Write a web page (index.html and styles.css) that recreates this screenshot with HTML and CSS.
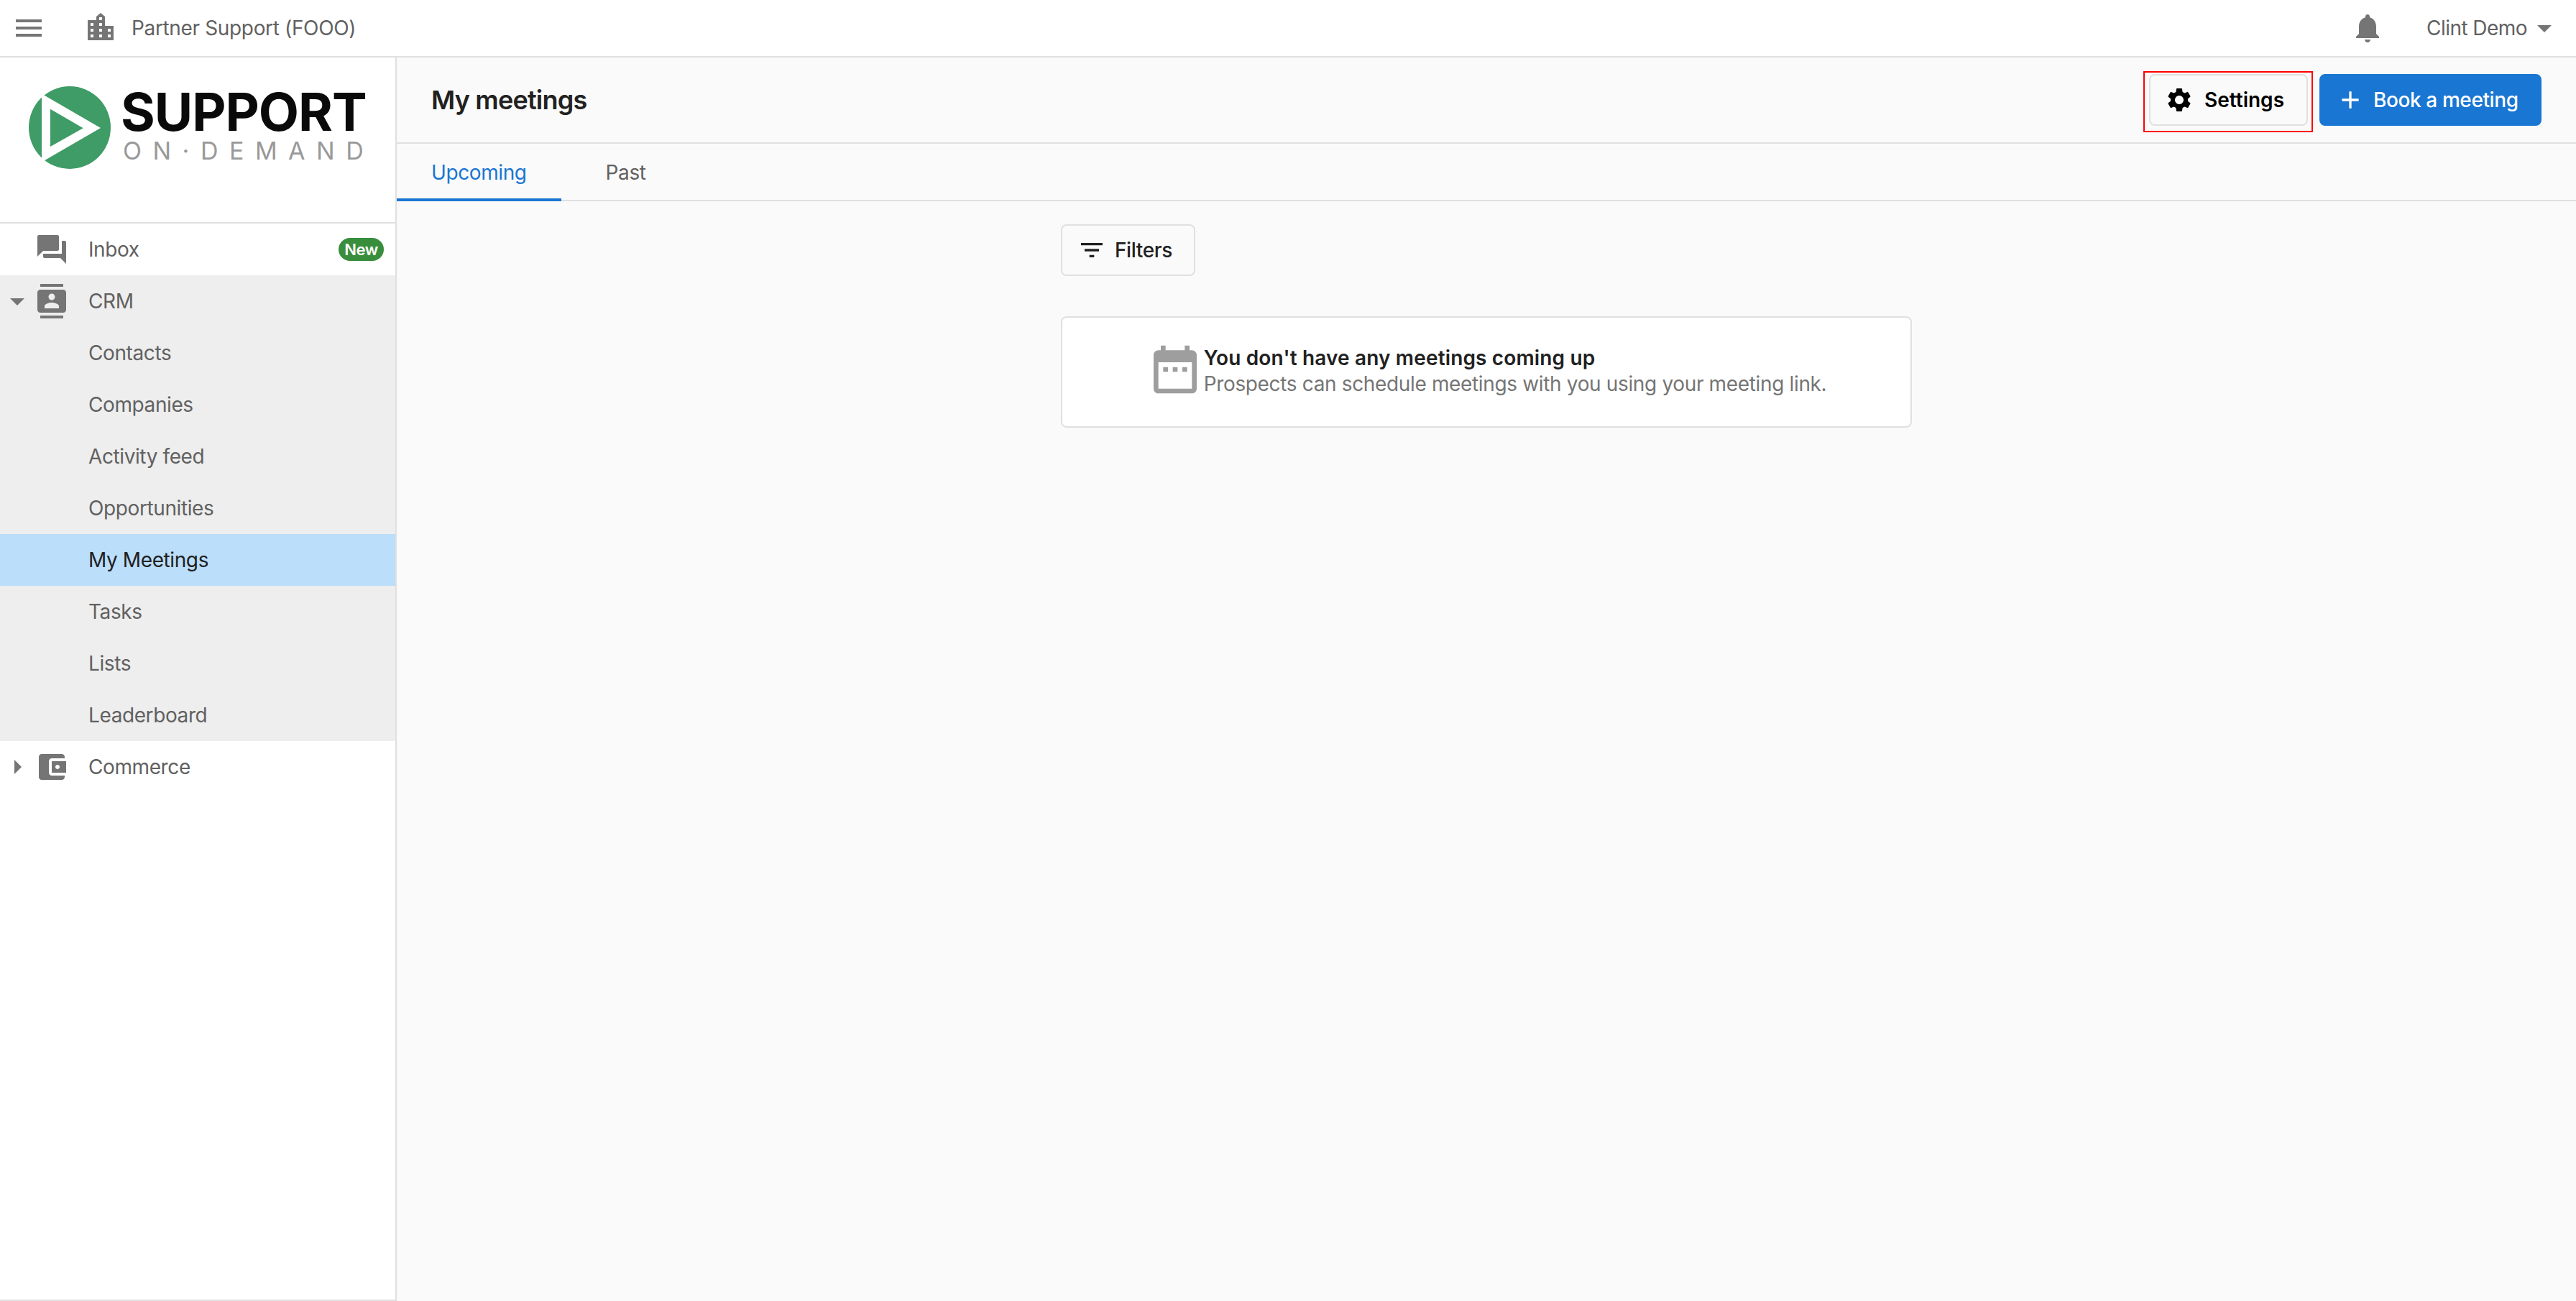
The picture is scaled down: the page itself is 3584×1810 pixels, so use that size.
FILE: index.html
```html
<!DOCTYPE html>
<html lang="en">
<head>
  <meta charset="UTF-8">
  <title>My meetings</title>
  <link rel="stylesheet" href="styles.css">
</head>
<body>
  <header class="topbar">
    <svg class="icon menu-icon" viewBox="0 0 24 24"><path d="M3 18h18v-2H3v2zm0-5h18v-2H3v2zm0-7v2h18V6H3z"/></svg>
    <svg class="icon org-icon" viewBox="0 0 48 48"><path fill-rule="evenodd" d="M6 13h12V8l6-5 6 5v13h12v20H6zM22 9h4v4h-4zM10 17h4v4h-4zM22 17h4v4h-4zM10 25h4v4h-4zM22 25h4v4h-4zM34 25h4v4h-4zM10 33h4v4h-4zM22 33h4v4h-4zM34 33h4v4h-4z"/></svg>
    <span class="org-name">Partner Support (FOOO)</span>
    <svg class="icon bell-icon" viewBox="0 0 24 24"><path d="M12 22c1.1 0 2-.9 2-2h-4c0 1.1.89 2 2 2zm6-6v-5c0-3.07-1.64-5.64-4.5-6.32V4c0-.83-.67-1.5-1.5-1.5s-1.5.67-1.5 1.5v.68C7.63 5.36 6 7.92 6 11v5l-2 2v1h16v-1l-2-2z"/></svg>
    <span class="user-name">Clint Demo</span>
    <svg class="icon" viewBox="0 0 24 24"><path d="M7 10l5 5 5-5z"/></svg>
  </header>

  <div class="layout">
    <aside class="sidebar">
      <div class="logo">
        <svg class="logo-mark" viewBox="0 0 114 115">
          <ellipse cx="57" cy="57.5" rx="57" ry="57.5" fill="#3f9c66"/>
          <path d="M18 10.5L100 58 18 105.5z" fill="#fff"/>
          <path d="M30 31.7L75.7 58.3 30 84z" fill="#3f9c66"/>
        </svg>
        <div class="logo-text">
          <span class="logo-top">SUPPORT</span>
          <span class="logo-bottom">ON·DEMAND</span>
        </div>
      </div>

      <nav>
        <a class="nav-item">
          <span class="caret-slot"></span>
          <svg class="icon" viewBox="0 0 24 24"><path d="M21 6h-2v9H6v2c0 .55.45 1 1 1h11l4 4V7c0-.55-.45-1-1-1zm-4 6V3c0-.55-.45-1-1-1H3c-.55 0-1 .45-1 1v14l4-4h10c.55 0 1-.45 1-1z"/></svg>
          <span class="nav-label">Inbox</span>
          <span class="badge">New</span>
        </a>
        <div class="nav-group">
          <a class="nav-item">
            <svg class="icon caret-slot" viewBox="0 0 24 24"><path d="M7 10l5 5 5-5z"/></svg>
            <svg class="icon" viewBox="0 0 24 24"><path d="M20 0H4v2h16V0zM4 24h16v-2H4v2zM20 4H4c-1.1 0-2 .9-2 2v12c0 1.1.9 2 2 2h16c1.1 0 2-.9 2-2V6c0-1.1-.9-2-2-2zm-8 2.75c1.24 0 2.25 1.01 2.25 2.25s-1.01 2.25-2.25 2.25S9.75 10.24 9.75 9 10.76 6.75 12 6.75zM17 17H7v-1.5c0-1.67 3.33-2.5 5-2.5s5 .83 5 2.5V17z"/></svg>
            <span class="nav-label">CRM</span>
          </a>
          <a class="nav-sub">Contacts</a>
          <a class="nav-sub">Companies</a>
          <a class="nav-sub">Activity feed</a>
          <a class="nav-sub">Opportunities</a>
          <a class="nav-sub active">My Meetings</a>
          <a class="nav-sub">Tasks</a>
          <a class="nav-sub">Lists</a>
          <a class="nav-sub">Leaderboard</a>
        </div>
        <a class="nav-item">
          <svg class="icon caret-slot" viewBox="0 0 24 24"><path d="M10 17l5-5-5-5v10z"/></svg>
          <svg class="icon" viewBox="0 0 24 24"><path d="M21 18v1c0 1.1-.9 2-2 2H5c-1.11 0-2-.9-2-2V5c0-1.1.89-2 2-2h14c1.1 0 2 .9 2 2v1h-9c-1.11 0-2 .9-2 2v8c0 1.1.89 2 2 2h9zm-9-2h10V8H12v8zm4-2.5c-.83 0-1.5-.67-1.5-1.5s.67-1.5 1.5-1.5 1.5.67 1.5 1.5-.67 1.5-1.5 1.5z"/></svg>
          <span class="nav-label">Commerce</span>
        </a>
      </nav>
    </aside>

    <main class="main">
      <div class="page-header">
        <h1>My meetings</h1>
        <div class="settings-wrap">
          <button class="btn btn-settings">
            <svg class="btn-icon" viewBox="0 0 24 24"><path d="M19.14 12.94c.04-.3.06-.61.06-.94 0-.32-.02-.64-.07-.94l2.03-1.58c.18-.14.23-.41.12-.61l-1.92-3.32c-.12-.22-.37-.29-.59-.22l-2.39.96c-.5-.38-1.03-.7-1.62-.94l-.36-2.54c-.04-.24-.24-.41-.48-.41h-3.84c-.24 0-.43.17-.47.41l-.36 2.54c-.59.24-1.13.57-1.62.94l-2.39-.96c-.22-.08-.47 0-.59.22L2.74 8.87c-.12.21-.08.47.12.61l2.03 1.58c-.05.3-.09.63-.09.94s.02.64.07.94l-2.03 1.58c-.18.14-.23.41-.12.61l1.92 3.32c.12.22.37.29.59.22l2.39-.96c.5.38 1.03.7 1.62.94l.36 2.54c.05.24.24.41.48.41h3.84c.24 0 .44-.17.47-.41l.36-2.54c.59-.24 1.13-.56 1.62-.94l2.39.96c.22.08.47 0 .59-.22l1.92-3.32c.12-.22.07-.47-.12-.61l-2.01-1.58zM12 15.6c-1.98 0-3.6-1.62-3.6-3.6s1.62-3.6 3.6-3.6 3.6 1.62 3.6 3.6-1.62 3.6-3.6 3.6z"/></svg>
            Settings
          </button>
          <div class="highlight"></div>
        </div>
        <button class="btn btn-primary">
          <svg class="btn-icon" viewBox="0 0 24 24"><path d="M19 13h-6v6h-2v-6H5v-2h6V5h2v6h6v2z"/></svg>
          Book a meeting
        </button>
      </div>

      <div class="tabs">
        <a class="tab active">Upcoming</a>
        <a class="tab">Past</a>
      </div>

      <div class="content">
        <button class="btn btn-filters">
          <svg class="btn-icon" viewBox="0 0 24 24"><path d="M10 18h4v-2h-4v2zM3 6v2h18V6H3zm3 7h12v-2H6v2z"/></svg>
          Filters
        </button>
        <div class="empty-card">
          <svg class="empty-icon" viewBox="0 0 24 24"><path d="M9 11H7v2h2v-2zm4 0h-2v2h2v-2zm4 0h-2v2h2v-2zm2-7h-1V2h-2v2H8V2H6v2H5c-1.11 0-1.99.9-1.99 2L3 20c0 1.1.89 2 2 2h14c1.1 0 2-.9 2-2V6c0-1.1-.9-2-2-2zm0 16H5V9h14v11z"/></svg>
          <div class="empty-text">
            <div class="empty-title">You don't have any meetings coming up</div>
            <div class="empty-sub">Prospects can schedule meetings with you using your meeting link.</div>
          </div>
        </div>
      </div>
    </main>
  </div>
</body>
</html>
```

FILE: styles.css
```css
* {
  box-sizing: border-box;
}
body {
  margin: 0;
  height: 100vh;
  overflow: hidden;
  display: flex;
  flex-direction: column;
  font-family: Inter, "Liberation Sans", sans-serif;
  font-size: 28px;
  line-height: 36px;
  letter-spacing: -0.4px;
  color: #616161;
  background: #fafafa;
}
.icon {
  width: 48px;
  height: 48px;
  flex: none;
  fill: #757575;
}

/* top bar */
.topbar {
  height: 80px;
  flex: none;
  display: flex;
  align-items: center;
  padding: 0 20px 0 16px;
  background: #fff;
  border-bottom: 2px solid #e0e0e0;
}
.org-icon {
  margin-left: 52px;
}
.org-name {
  margin-left: 19px;
  letter-spacing: -0.35px;
}
.bell-icon {
  margin-left: auto;
}
.user-name {
  margin-left: 58px;
  letter-spacing: -0.55px;
}

/* sidebar */
.layout {
  flex: 1;
  display: flex;
  min-height: 0;
}
.sidebar {
  width: 552px;
  flex: none;
  background: #fff;
  border-right: 2px solid #e0e0e0;
  border-bottom: 2px solid #e0e0e0;
}
.logo {
  height: 231px;
  display: flex;
  padding: 40px 0 0 40px;
  border-bottom: 2px solid #e0e0e0;
}
.logo-mark {
  width: 114px;
  height: 115px;
  flex: none;
}
.logo-text {
  margin-left: 14px;
  display: flex;
  flex-direction: column;
}
.logo-top {
  font-size: 73px;
  font-weight: 700;
  line-height: 56px;
  letter-spacing: -1px;
  color: #0a0a0a;
  margin-top: 8px;
}
.logo-bottom {
  font-size: 34px;
  line-height: 26px;
  letter-spacing: 15.5px;
  color: #999;
  margin-top: 13px;
  margin-left: 3px;
}
.nav-item {
  height: 72px;
  display: flex;
  align-items: center;
}
.caret-slot {
  width: 48px;
  height: 48px;
  flex: none;
}
.nav-label {
  margin-left: 27px;
}
.badge {
  margin-left: auto;
  margin-right: 16px;
  width: 63px;
  height: 32px;
  border-radius: 16px;
  background: #388e3c;
  color: #fff;
  font-size: 22px;
  font-weight: 600;
  line-height: 32px;
  text-align: center;
}
.nav-group {
  background: #eee;
}
.nav-sub {
  display: block;
  height: 72px;
  line-height: 72px;
  padding-left: 123px;
}
.nav-sub.active {
  background: #bbdefb;
  color: #212121;
}

/* main column */
.main {
  flex: 1;
  min-width: 0;
}
.page-header {
  height: 120px;
  display: flex;
  align-items: center;
  gap: 16px;
  padding: 0 48px;
  border-bottom: 2px solid #e0e0e0;
}
h1 {
  margin: 0 auto 0 0;
  font-size: 36px;
  font-weight: 600;
  letter-spacing: -0.8px;
  color: #212121;
}
.btn {
  height: 72px;
  display: flex;
  align-items: center;
  border: 2px solid #e0e0e0;
  border-radius: 8px;
  background: transparent;
  font-family: inherit;
  font-size: 28px;
  font-weight: 500;
  letter-spacing: -0.4px;
  color: #212121;
}
.btn-icon {
  width: 40px;
  height: 40px;
  flex: none;
  fill: currentColor;
}
.settings-wrap {
  position: relative;
}
.btn-settings {
  width: 221px;
  padding: 0 0 0 20px;
  gap: 15px;
  font-weight: 600;
  letter-spacing: 0;
  color: #000;
}
.highlight {
  position: absolute;
  top: -4px;
  right: -7px;
  bottom: -9px;
  left: -8px;
  border: 2px solid #f00;
}
.btn-primary {
  width: 309px;
  padding: 0 0 0 21px;
  gap: 12px;
  background: #1976d2;
  border-color: #1976d2;
  color: #fff;
}
.tabs {
  height: 80px;
  display: flex;
  border-bottom: 2px solid #e0e0e0;
}
.tab {
  height: 80px;
  padding: 0 48px;
  line-height: 80px;
}
.tab.active {
  color: #1976d2;
  border-bottom: 4px solid #1976d2;
  margin-right: 14px;
}
.content {
  width: 1184px;
  margin: 32px auto 0;
}
.btn-filters {
  width: 187px;
  padding: 0 0 0 21px;
  gap: 12px;
}
.empty-card {
  margin-top: 56px;
  height: 155px;
  display: flex;
  justify-content: center;
  padding-top: 32px;
  background: #fff;
  border: 2px solid #e0e0e0;
  border-radius: 8px;
}
.empty-icon {
  width: 80px;
  height: 80px;
  flex: none;
  fill: #9e9e9e;
}
.empty-text {
  margin-top: 6px;
}
.empty-title {
  font-weight: 600;
  letter-spacing: 0.15px;
  color: #212121;
}
.empty-sub {
  letter-spacing: -0.35px;
  color: #757575;
}
```
